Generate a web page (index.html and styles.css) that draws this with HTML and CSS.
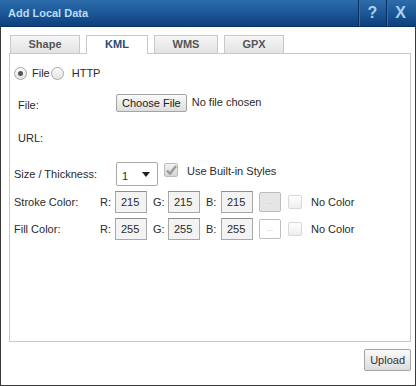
FILE: index.html
```html
<!DOCTYPE html>
<html lang="en">
<head>
    <meta charset="UTF-8">
    <title>Add Local Data</title>
    <link rel="stylesheet" href="styles.css">
</head>
<body>
    <div class="dialog">
        <div class="titlebar">
            <span class="title">Add Local Data</span>
            <button type="button" class="title-button">?</button>
            <button type="button" class="title-button">X</button>
        </div>

        <div class="dialog-body">
            <div class="tabs">
                <div class="tab tab-shape">Shape</div>
                <div class="tab tab-kml active">KML</div>
                <div class="tab tab-wms">WMS</div>
                <div class="tab tab-gpx">GPX</div>
            </div>

            <div class="panel">
                <div class="row radio-row">
                    <span class="radio checked"></span>
                    <span class="radio-label">File</span>
                    <span class="radio"></span>
                    <span class="radio-label http">HTTP</span>
                </div>

                <div class="row file-row">
                    <span class="label indent">File:</span>
                    <span class="file-button">Choose File</span>
                    <span class="file-status">No file chosen</span>
                </div>

                <div class="row url-row">
                    <span class="label indent">URL:</span>
                </div>

                <div class="row size-row">
                    <span class="label">Size / Thickness:</span>
                    <div class="select">
                        <span>1</span>
                        <svg width="8" height="5" viewBox="0 0 8 5"><path d="M0 0h8L4 5z" fill="#222"/></svg>
                    </div>
                    <span class="checkbox checked">
                        <svg width="11" height="10" viewBox="0 0 11 10"><path d="M1 5.5l3 3.2L10 1" fill="none" stroke="#9a9a9a" stroke-width="2.4"/></svg>
                    </span>
                    <span class="check-label">Use Built-in Styles</span>
                </div>

                <div class="row color-row">
                    <span class="label short">Stroke Color:</span>
                    <span class="chan">R:</span><span class="num">215</span>
                    <span class="chan">G:</span><span class="num">215</span>
                    <span class="chan">B:</span><span class="num">215</span>
                    <span class="swatch stroke">...</span>
                    <span class="checkbox"></span>
                    <span class="check-label">No Color</span>
                </div>

                <div class="row color-row">
                    <span class="label short">Fill Color:</span>
                    <span class="chan">R:</span><span class="num">255</span>
                    <span class="chan">G:</span><span class="num">255</span>
                    <span class="chan">B:</span><span class="num">255</span>
                    <span class="swatch fill">...</span>
                    <span class="checkbox"></span>
                    <span class="check-label">No Color</span>
                </div>
            </div>

            <div class="footer">
                <button type="button" class="upload-button">Upload</button>
            </div>
        </div>
    </div>
</body>
</html>
```

FILE: styles.css
```css
body {
    margin: 0;
    font-family: 'Liberation Sans', Arial, sans-serif;
    font-size: 11px;
    color: #2a2a2a;
    background-color: #fff;
}
.dialog {
    width: 416px;
    height: 386px;
    box-sizing: border-box;
    border: 1px solid #3a3a3a;
    border-top: none;
    background-color: #fff;
    display: flex;
    flex-direction: column;
}
.titlebar {
    height: 27px;
    margin: 0 -1px 0 -1px;
    display: flex;
    align-items: stretch;
    background: linear-gradient(#2d6cab, #1a5596 55%, #0d3f7c);
    border-bottom: 1px solid #0a305e;
    box-sizing: border-box;
}
.title {
    flex: 1;
    padding-left: 8px;
    line-height: 27px;
    font-weight: bold;
    font-size: 11px;
    color: #bcdcf5;
}
.title-button {
    width: 28px;
    margin: 0;
    padding: 0;
    border: none;
    border-left: 1px solid #0a2e59;
    box-shadow: inset 1px 0 0 #3672ad;
    background: transparent;
    color: #a9d0f0;
    font-family: 'Liberation Sans', Arial, sans-serif;
    font-weight: bold;
    font-size: 16px;
}
.title-button:last-child {
    margin-right: 2px;
}
.dialog-body {
    flex: 1;
    display: flex;
    flex-direction: column;
    padding: 8px 4px 0 8px;
}
.tabs {
    display: flex;
    gap: 6px;
    padding-left: 1px;
    position: relative;
    z-index: 1;
}
.tab {
    height: 17px;
    line-height: 17px;
    border: 1px solid #c9c9c9;
    border-bottom: none;
    text-align: center;
    font-weight: bold;
    font-size: 11px;
    color: #555;
    background: linear-gradient(#f6f6f6, #e3e3e3);
}
.tab-shape { width: 68px; }
.tab-kml { width: 60px; }
.tab-wms { width: 62px; }
.tab-gpx { width: 58px; }
.tab.active {
    height: 18px;
    margin-bottom: -1px;
    background: #fff;
    color: #2c4a74;
}
.panel {
    height: 280px;
    border: 1px solid #c9c9c9;
    padding: 7px 0 0 4px;
}
.row {
    display: flex;
    align-items: center;
}
.radio-row {
    height: 24px;
}
.radio {
    width: 11px;
    height: 11px;
    border: 1px solid #a6a6a6;
    border-radius: 50%;
    background: linear-gradient(#fdfdfd, #e2e2e2);
    display: flex;
    align-items: center;
    justify-content: center;
}
.radio.checked::after {
    content: "";
    width: 5px;
    height: 5px;
    border-radius: 50%;
    background-color: #555;
}
.radio-label {
    margin: 0 1px 0 5px;
}
.radio-label.http {
    margin-left: 8px;
}
.label {
    width: 102px;
    flex-shrink: 0;
}
.label.indent {
    width: 98px;
    padding-left: 4px;
}
.label.short {
    width: 86px;
}
.file-row {
    height: 24px;
    margin-top: 6px;
}
.file-row .label {
    padding-top: 4px;
}
.file-button {
    height: 16px;
    line-height: 16px;
    padding: 0 5px;
    border: 1px solid #a4a4a4;
    border-radius: 2px;
    background: linear-gradient(#fafafa, #dedede);
    color: #222;
}
.file-status {
    margin-left: 5px;
    position: relative;
    top: -1px;
}
.url-row {
    height: 24px;
    margin-top: 11px;
}
.size-row {
    height: 26px;
    margin-top: 11px;
}
.select {
    width: 40px;
    height: 22px;
    border: 1px solid #a9a9a9;
    border-radius: 2px;
    display: flex;
    align-items: center;
    justify-content: space-between;
    background-color: #fff;
}
.select span {
    padding: 3px 0 0 5px;
}
.select svg {
    margin-right: 7px;
}
.checkbox {
    width: 12px;
    height: 12px;
    margin-left: 6px;
    border: 1px solid #d9d9d9;
    border-radius: 2px;
    background: linear-gradient(#fff, #eee);
    display: flex;
    align-items: center;
    justify-content: center;
}
.size-row .checkbox {
    margin-bottom: 8px;
    border-color: #bcbcbc;
    background: linear-gradient(#f2f2f2, #d6d6d6);
}
.size-row .check-label {
    margin-bottom: 6px;
}
.check-label {
    margin-left: 9px;
}
.color-row {
    height: 22px;
    margin-top: 4px;
}
.color-row + .color-row {
    margin-top: 5px;
}
.chan {
    width: 15px;
}
.num {
    width: 25px;
    height: 20px;
    line-height: 21px;
    padding-left: 5px;
    margin-right: 6px;
    border: 1px solid #a9a9a9;
    border-top-color: #8f8f8f;
    background-color: #f3f3f3;
}
.swatch {
    width: 20px;
    height: 18px;
    line-height: 18px;
    border: 1px solid #bdbdbd;
    border-radius: 2px;
    text-align: center;
    font-size: 7px;
    color: #b5b5b5;
}
.swatch.stroke {
    background-color: #e6e6e6;
}
.swatch.fill {
    background-color: #fff;
}
.color-row .checkbox {
    margin-left: 7px;
}
.footer {
    display: flex;
    justify-content: flex-end;
    padding-top: 7px;
}
.upload-button {
    height: 22px;
    padding: 0 5px;
    border: 1px solid #a4a4a4;
    border-radius: 2px;
    background: linear-gradient(#fafafa, #dcdcdc);
    font-family: 'Liberation Sans', Arial, sans-serif;
    font-size: 11px;
    color: #333;
}
```
